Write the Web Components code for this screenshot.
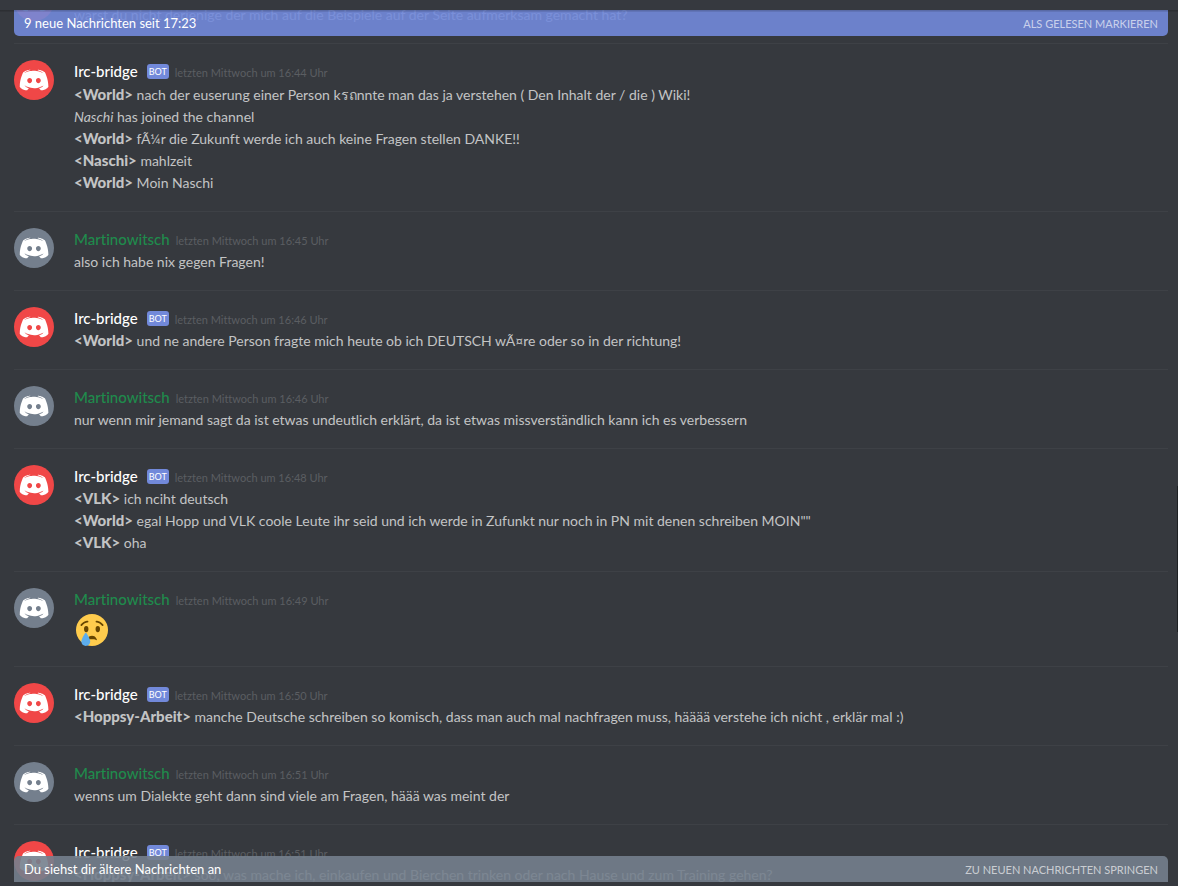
<!DOCTYPE html>
<html lang="de">
<head>
<meta charset="utf-8">
<meta name="viewport" content="width=device-width, initial-scale=1">
<title>Chat</title>
<style>
  body {
    margin: 0;
    background: #36393e;
    font-family: Lato, "Liberation Sans", sans-serif;
    font-variant-ligatures: none;
  }
</style>
</head>
<body>
<chat-window>
  <new-messages-bar slot="top" action="Als gelesen markieren">9 neue Nachrichten seit 17:23</new-messages-bar>

  <chat-group author="Irc-bridge" time="16:43" bot>
    <chat-line>warst du nicht derjenige der mich auf die Beispiele auf der Seite aufmerksam gemacht hat?</chat-line>
  </chat-group>
  <chat-group author="Irc-bridge" time="16:44" bot>
    <chat-line tall><b>&lt;World&gt;</b> nach der euserung einer Person kรถnnte man das ja verstehen ( Den Inhalt der / die ) Wiki!</chat-line>
    <chat-line><i>Naschi</i> has joined the channel</chat-line>
    <chat-line><b>&lt;World&gt;</b> fÃ¼r die Zukunft werde ich auch keine Fragen stellen DANKE!!</chat-line>
    <chat-line><b>&lt;Naschi&gt;</b> mahlzeit</chat-line>
    <chat-line><b>&lt;World&gt;</b> Moin Naschi</chat-line>
  </chat-group>
  <chat-group author="Martinowitsch" time="16:45">
    <chat-line>also ich habe nix gegen Fragen!</chat-line>
  </chat-group>
  <chat-group author="Irc-bridge" time="16:46" bot>
    <chat-line><b>&lt;World&gt;</b> und ne andere Person fragte mich heute ob ich DEUTSCH wÃ¤re oder so in der richtung!</chat-line>
  </chat-group>
  <chat-group author="Martinowitsch" time="16:46">
    <chat-line>nur wenn mir jemand sagt da ist etwas undeutlich erklärt, da ist etwas missverständlich kann ich es verbessern</chat-line>
  </chat-group>
  <chat-group author="Irc-bridge" time="16:48" bot>
    <chat-line><b>&lt;VLK&gt;</b> ich nciht deutsch</chat-line>
    <chat-line><b>&lt;World&gt;</b> egal Hopp und VLK coole Leute ihr seid und ich werde in Zufunkt nur noch in PN mit denen schreiben MOIN""</chat-line>
    <chat-line><b>&lt;VLK&gt;</b> oha</chat-line>
  </chat-group>
  <chat-group author="Martinowitsch" time="16:49">
    <cry-emoji></cry-emoji>
  </chat-group>
  <chat-group author="Irc-bridge" time="16:50" bot>
    <chat-line><b>&lt;Hoppsy-Arbeit&gt;</b> manche Deutsche schreiben so komisch, dass man auch mal nachfragen muss, hääää verstehe ich nicht , erklär mal :)</chat-line>
  </chat-group>
  <chat-group author="Martinowitsch" time="16:51">
    <chat-line>wenns um Dialekte geht dann sind viele am Fragen, häää was meint der</chat-line>
  </chat-group>
  <chat-group author="Irc-bridge" time="16:51" bot>
    <chat-line><b>&lt;Hoppsy-Arbeit&gt;</b> soo, was mache ich, einkaufen und Bierchen trinken oder nach Hause und zum Training gehen?</chat-line>
  </chat-group>

  <new-messages-bar slot="bottom" bottom action="Zu neuen Nachrichten springen">Du siehst dir ältere Nachrichten an</new-messages-bar>
</chat-window>

<script>
class ChatWindow extends HTMLElement {
  constructor() {
    super();
    this.attachShadow({ mode: "open" });
  }

  static get styles() {
    return /* css */`
      :host {
        --gutter: 14px;

        display: flex;
        flex-direction: column;
        box-sizing: border-box;
        height: 100vh;
        padding: 10px 0 4px;
        background: #36393f;
      }

      .viewport {
        position: relative;
        flex: 1;
        min-height: 0;
        overflow: hidden;
        background: #36393e;
      }

      /* current scroll position of the history */
      .history {
        margin-top: -45px;
        padding: 0 10px 0 var(--gutter);
      }

      .top,
      .bottom {
        position: absolute;
        left: var(--gutter);
        right: 10px;
      }

      .top {
        top: 0;
      }

      .bottom {
        bottom: 0;
      }

      .shadow {
        position: absolute;
        inset: 0 0 auto;
        height: 2px;
        background: linear-gradient(rgba(0, 0, 0, .22), rgba(0, 0, 0, .06));
      }

      .thumb {
        position: absolute;
        top: 54.6%;
        right: 0;
        width: 1px;
        height: 16.7%;
        background: #1e2124;
      }
    `;
  }

  connectedCallback() {
    this.shadowRoot.innerHTML = /* html */`
    <style>${ChatWindow.styles}</style>
    <main class="viewport">
      <div class="history"><slot></slot></div>
      <div class="top"><slot name="top"></slot></div>
      <div class="bottom"><slot name="bottom"></slot></div>
      <div class="shadow"></div>
      <div class="thumb"></div>
    </main>`;
  }
}

class NewMessagesBar extends HTMLElement {
  constructor() {
    super();
    this.attachShadow({ mode: "open" });
  }

  static get styles() {
    return /* css */`
      :host {
        display: flex;
        justify-content: space-between;
        align-items: center;
        height: 26px;
        padding: 0 10px;
        box-sizing: border-box;
        border-radius: 0 0 5px 5px;
        background: rgba(114, 137, 218, .9);
        color: #fff;
        font-size: 13px;
      }

      :host([bottom]) {
        border-radius: 5px 5px 0 0;
        background: rgba(116, 127, 141, .9);
      }

      button {
        padding: 0;
        border: 0;
        background: none;
        color: rgba(255, 255, 255, .65);
        font: inherit;
        font-size: 11px;
        text-transform: uppercase;
        cursor: pointer;
      }
    `;
  }

  connectedCallback() {
    this.shadowRoot.innerHTML = /* html */`
    <style>${NewMessagesBar.styles}</style>
    <span><slot></slot></span>
    <button type="button">${this.getAttribute("action")}</button>`;
  }
}

class UserAvatar extends HTMLElement {
  constructor() {
    super();
    this.attachShadow({ mode: "open" });
  }

  static get styles() {
    return /* css */`
      :host {
        display: block;
        width: 40px;
        height: 40px;
        border-radius: 50%;
        background: #747f8d;
      }

      :host([red]) {
        background: #f04747;
      }

      svg {
        display: block;
        fill: #fff;
      }
    `;
  }

  connectedCallback() {
    this.shadowRoot.innerHTML = /* html */`
    <style>${UserAvatar.styles}</style>
    <svg width="40" height="40" viewBox="38.6 28.7 168 168" aria-hidden="true">
      <path fill-rule="evenodd" d="M150.9 155.9c0 0-3.7-4.4-6.8-8.3 13.5-3.8 18.6-12.3 18.6-12.3-4.2 2.8-8.2 4.7-11.8 6-5.1 2.2-10 3.6-14.8 4.5-9.8 1.8-18.8 1.3-26.5-.1-5.8-1.1-10.8-2.8-15-4.4-2.4-.9-4.9-2.1-7.5-3.5-.3-.2-.6-.3-.9-.5-.2-.1-.3-.2-.4-.2-1.8-1-2.8-1.7-2.8-1.7s4.9 8.2 18 12.2c-3.1 3.9-6.9 8.6-6.9 8.6-22.8-.7-31.4-15.6-31.4-15.6 0-33.2 14.9-60.1 14.9-60.1 14.8-11.1 29-10.8 29-10.8l1 1.2c-18.6 5.4-27.1 13.5-27.1 13.5s2.3-1.2 6.1-3c11-4.8 19.8-6.2 23.4-6.5.6-.1 1.1-.2 1.7-.2 6.3-.8 13.4-1 20.8-.2 9.8 1.1 20.3 4 31 9.9 0 0-8.2-7.8-25.7-13.1l1.4-1.6s14.1-.3 29 10.8c0 0 14.9 26.9 14.9 60.1 0 0-8.8 14.9-31.6 15.6zM104.4 103.9c-5.7 0-10.2 5-10.2 11.1s4.6 11.1 10.2 11.1c5.7 0 10.2-5 10.2-11.1.1-6.1-4.5-11.1-10.2-11.1zM140.9 103.9c-5.7 0-10.2 5-10.2 11.1s4.6 11.1 10.2 11.1c5.7 0 10.2-5 10.2-11.1s-4.5-11.1-10.2-11.1z"/>
    </svg>`;
  }
}

class ChatGroup extends HTMLElement {
  constructor() {
    super();
    this.attachShadow({ mode: "open" });
  }

  static get styles() {
    return /* css */`
      :host {
        display: flex;
        gap: 20px;
        padding: 16px 0 17px;
        border-bottom: 1px solid #3e4146;
      }

      user-avatar {
        flex: none;
      }

      .content {
        flex: 1;
        min-width: 0;
      }

      header {
        display: flex;
        align-items: baseline;
        height: 23px;
        line-height: 23px;
        white-space: nowrap;
      }

      .author {
        color: #1f8b4c;
        font-size: 15px;
        font-weight: 500;
      }

      :host([bot]) .author {
        color: #fff;
      }

      .tag {
        align-self: center;
        margin-left: 9px;
        padding: 0 2px;
        border-radius: 3px;
        background: #7289da;
        color: #fff;
        font-size: 9px;
        line-height: 15px;
      }

      time {
        margin-left: 6px;
        color: #5b5e62;
        font-size: 11px;
      }
    `;
  }

  connectedCallback() {
    const bot = this.hasAttribute("bot");
    const time = this.getAttribute("time");
    this.shadowRoot.innerHTML = /* html */`
    <style>${ChatGroup.styles}</style>
    <user-avatar ${bot ? "red" : ""}></user-avatar>
    <div class="content">
      <header>
        <span class="author">${this.getAttribute("author")}</span>
        ${bot ? `<span class="tag">BOT</span>` : ""}
        <time datetime="${time}">letzten Mittwoch um ${time} Uhr</time>
      </header>
      <slot></slot>
    </div>`;
  }
}

class ChatLine extends HTMLElement {
  constructor() {
    super();
    this.attachShadow({ mode: "open" });
  }

  static get styles() {
    return /* css */`
      :host {
        display: block;
        color: #c3c4c5;
        font-size: 14px;
        line-height: 22px;
      }

      /* room for scripts with higher glyphs */
      :host([tall]) {
        line-height: 23px;
      }

      ::slotted(b) {
        font-size: 15px;
        font-weight: 900;
        line-height: 1;
      }
    `;
  }

  connectedCallback() {
    this.shadowRoot.innerHTML = /* html */`
    <style>${ChatLine.styles}</style>
    <slot></slot>`;
  }
}

class CryEmoji extends HTMLElement {
  constructor() {
    super();
    this.attachShadow({ mode: "open" });
  }

  static get styles() {
    return /* css */`
      :host {
        display: block;
        padding: 3px 2px;
      }

      svg {
        display: block;
      }
    `;
  }

  connectedCallback() {
    this.shadowRoot.innerHTML = /* html */`
    <style>${CryEmoji.styles}</style>
    <svg width="32" height="32" viewBox="0 0 36 36" role="img" aria-label="cry">
      <circle cx="18" cy="18" r="18" fill="#ffcc4d"/>
      <g fill="#664500">
        <ellipse cx="11.5" cy="17" rx="2.5" ry="3.5"/>
        <ellipse cx="24.5" cy="17" rx="2.5" ry="3.5"/>
        <path d="M5.999 13.5c-.208 0-.419-.065-.599-.2-.442-.331-.531-.958-.2-1.4 3.262-4.35 7.616-4.4 7.8-4.4.552 0 1 .448 1 1 0 .551-.445.998-.996 1-.155.002-3.568.086-6.204 3.6-.196.262-.497.4-.801.4zm24.002 0c-.305 0-.604-.138-.801-.4-2.641-3.521-6.061-3.599-6.206-3.6-.55-.006-.994-.456-.991-1.005.003-.551.447-.995.997-.995.184 0 4.537.05 7.8 4.4.332.442.242 1.069-.2 1.4-.18.135-.39.2-.599.2z"/>
        <path d="M23.485 28.879C23.474 28.835 22.34 24.5 18 24.5s-5.474 4.335-5.485 4.379c-.053.213.044.431.232.544.188.112.433.086.596-.06C13.352 29.355 14.356 28.5 18 28.5c3.59 0 4.617.83 4.656.863.095.091.219.137.344.137.084 0 .169-.021.246-.064.196-.112.294-.339.239-.557z"/>
      </g>
      <path fill="#5dadec" d="M16 31c0 2.762-2.238 5-5 5s-5-2.238-5-5 4-10 5-10 5 7.238 5 10z"/>
    </svg>`;
  }
}

customElements.define("chat-window", ChatWindow);
customElements.define("new-messages-bar", NewMessagesBar);
customElements.define("user-avatar", UserAvatar);
customElements.define("chat-group", ChatGroup);
customElements.define("chat-line", ChatLine);
customElements.define("cry-emoji", CryEmoji);
</script>
</body>
</html>
